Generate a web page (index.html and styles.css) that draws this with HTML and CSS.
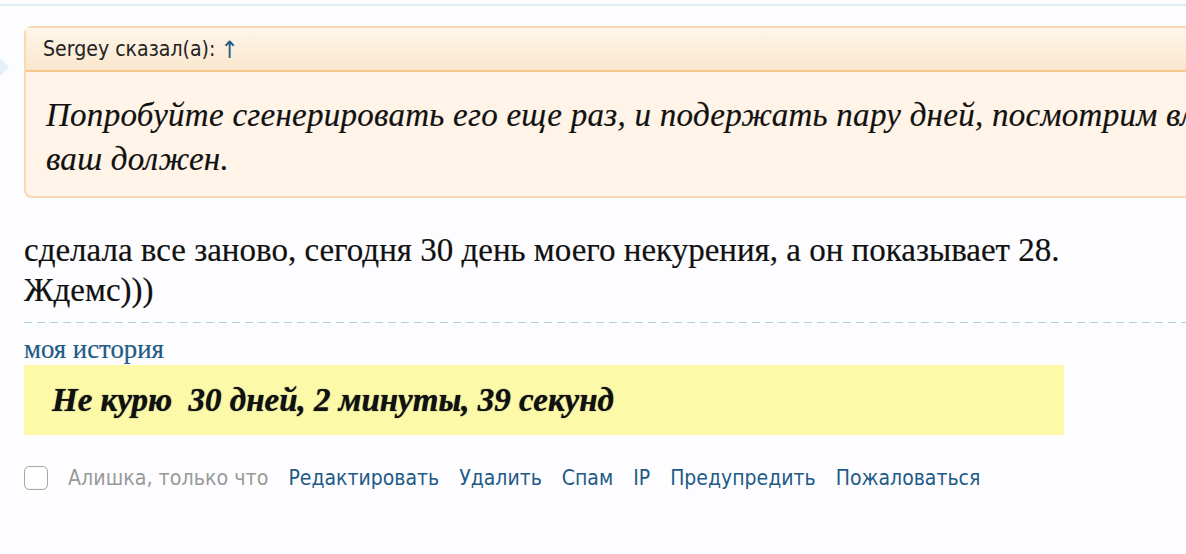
FILE: index.html
```html
<!DOCTYPE html>
<html lang="ru">
<head>
<meta charset="utf-8">
<title>Сообщение</title>
<link rel="stylesheet" href="styles.css">
</head>
<body>
<div class="topline"></div>
<div class="notch"></div>
<article class="post">
  <blockquote class="quote">
    <div class="quote-head">Sergey сказал(а): <a class="up" href="#">↑</a></div>
    <div class="quote-body">Попробуйте сгенерировать его еще раз, и подержать пару дней, посмотрим вл<br>ваш должен.</div>
  </blockquote>
  <p class="message">сделала все заново, сегодня 30 день моего некурения, а он показывает 28.<br>Ждемс)))</p>
  <div class="divider"></div>
  <a class="story" href="#">моя история</a>
  <div class="banner"><span class="banner-text">Не курю&nbsp; 30 дней, 2 минуты, 39 секунд</span></div>
  <div class="actions">
    <span class="check"></span>
    <span class="meta">Алишка, только что</span>
    <a href="#">Редактировать</a>
    <a href="#">Удалить</a>
    <a href="#">Спам</a>
    <a href="#">IP</a>
    <a href="#">Предупредить</a>
    <a href="#">Пожаловаться</a>
  </div>
</article>
</body>
</html>
```
FILE: styles.css
```css
html, body { margin: 0; padding: 0; height: 100%; overflow: hidden; }
body { background: #fdfdff; color: #111; font-family: "Liberation Serif", serif; position: relative; }
a { color: #225a86; text-decoration: none; }
.topline { height: 2px; margin-top: 4px; background: #dcedf8; }
.notch { position: absolute; left: -9px; top: 58px; width: 18px; height: 18px; background: #e4f1fb; clip-path: polygon(50% 0, 100% 50%, 50% 100%, 0 50%); }
.post { padding: 20px 0 0 24px; width: 1300px; }
.quote { margin: 0; height: 172px; box-sizing: border-box; border: 2px solid #f8d9b0; border-right: 0; border-radius: 8px 0 0 8px; background: #fff4e7; }
.quote-head { height: 44px; box-sizing: border-box; padding: 8px 0 0 17px; border-bottom: 2px solid #f8c88a; background: linear-gradient(#fef6ea, #fae6cd); font: 21.1px/26px "DejaVu Sans", sans-serif; font-stretch: condensed; color: #222; }
.up { font-size: 24px; line-height: 20px; vertical-align: -2px; margin-left: -1px; }
.quote-body { padding: 21px 0 0 20px; font: italic 33px/44px "Liberation Serif", serif; letter-spacing: .27px; white-space: nowrap; -webkit-text-stroke: .2px #111; }
.message { margin: 32px 0 0; font-size: 33px; line-height: 40px; white-space: nowrap; -webkit-text-stroke: .2px #111; }
.divider { margin-top: 12px; width: 1162px; height: 1px; background: repeating-linear-gradient(90deg, #aed0dc 0 8px, transparent 8px 13px); }
.story { display: block; margin-top: 12px; margin-bottom: 2px; font-size: 26.8px; line-height: 28px; -webkit-text-stroke: .2px #225a86; }
.banner { width: 1040px; height: 70px; background: #fcf9a8; display: flex; align-items: center; padding-left: 28px; box-sizing: border-box; }
.banner-text { font: italic bold 33px "Liberation Serif", serif; color: #111; text-shadow: 0 0 1px #333; }
.actions { display: flex; align-items: center; margin-top: 30px; font: 21px/26px "DejaVu Sans", sans-serif; font-stretch: condensed; gap: 20px; }
.check { width: 24px; height: 24px; box-sizing: border-box; border: 1px solid #aaa; border-radius: 5px; background: #fff; box-shadow: inset 0 0 1px #bbb; }
.meta { color: #999; font-size: 21.25px; }
```
